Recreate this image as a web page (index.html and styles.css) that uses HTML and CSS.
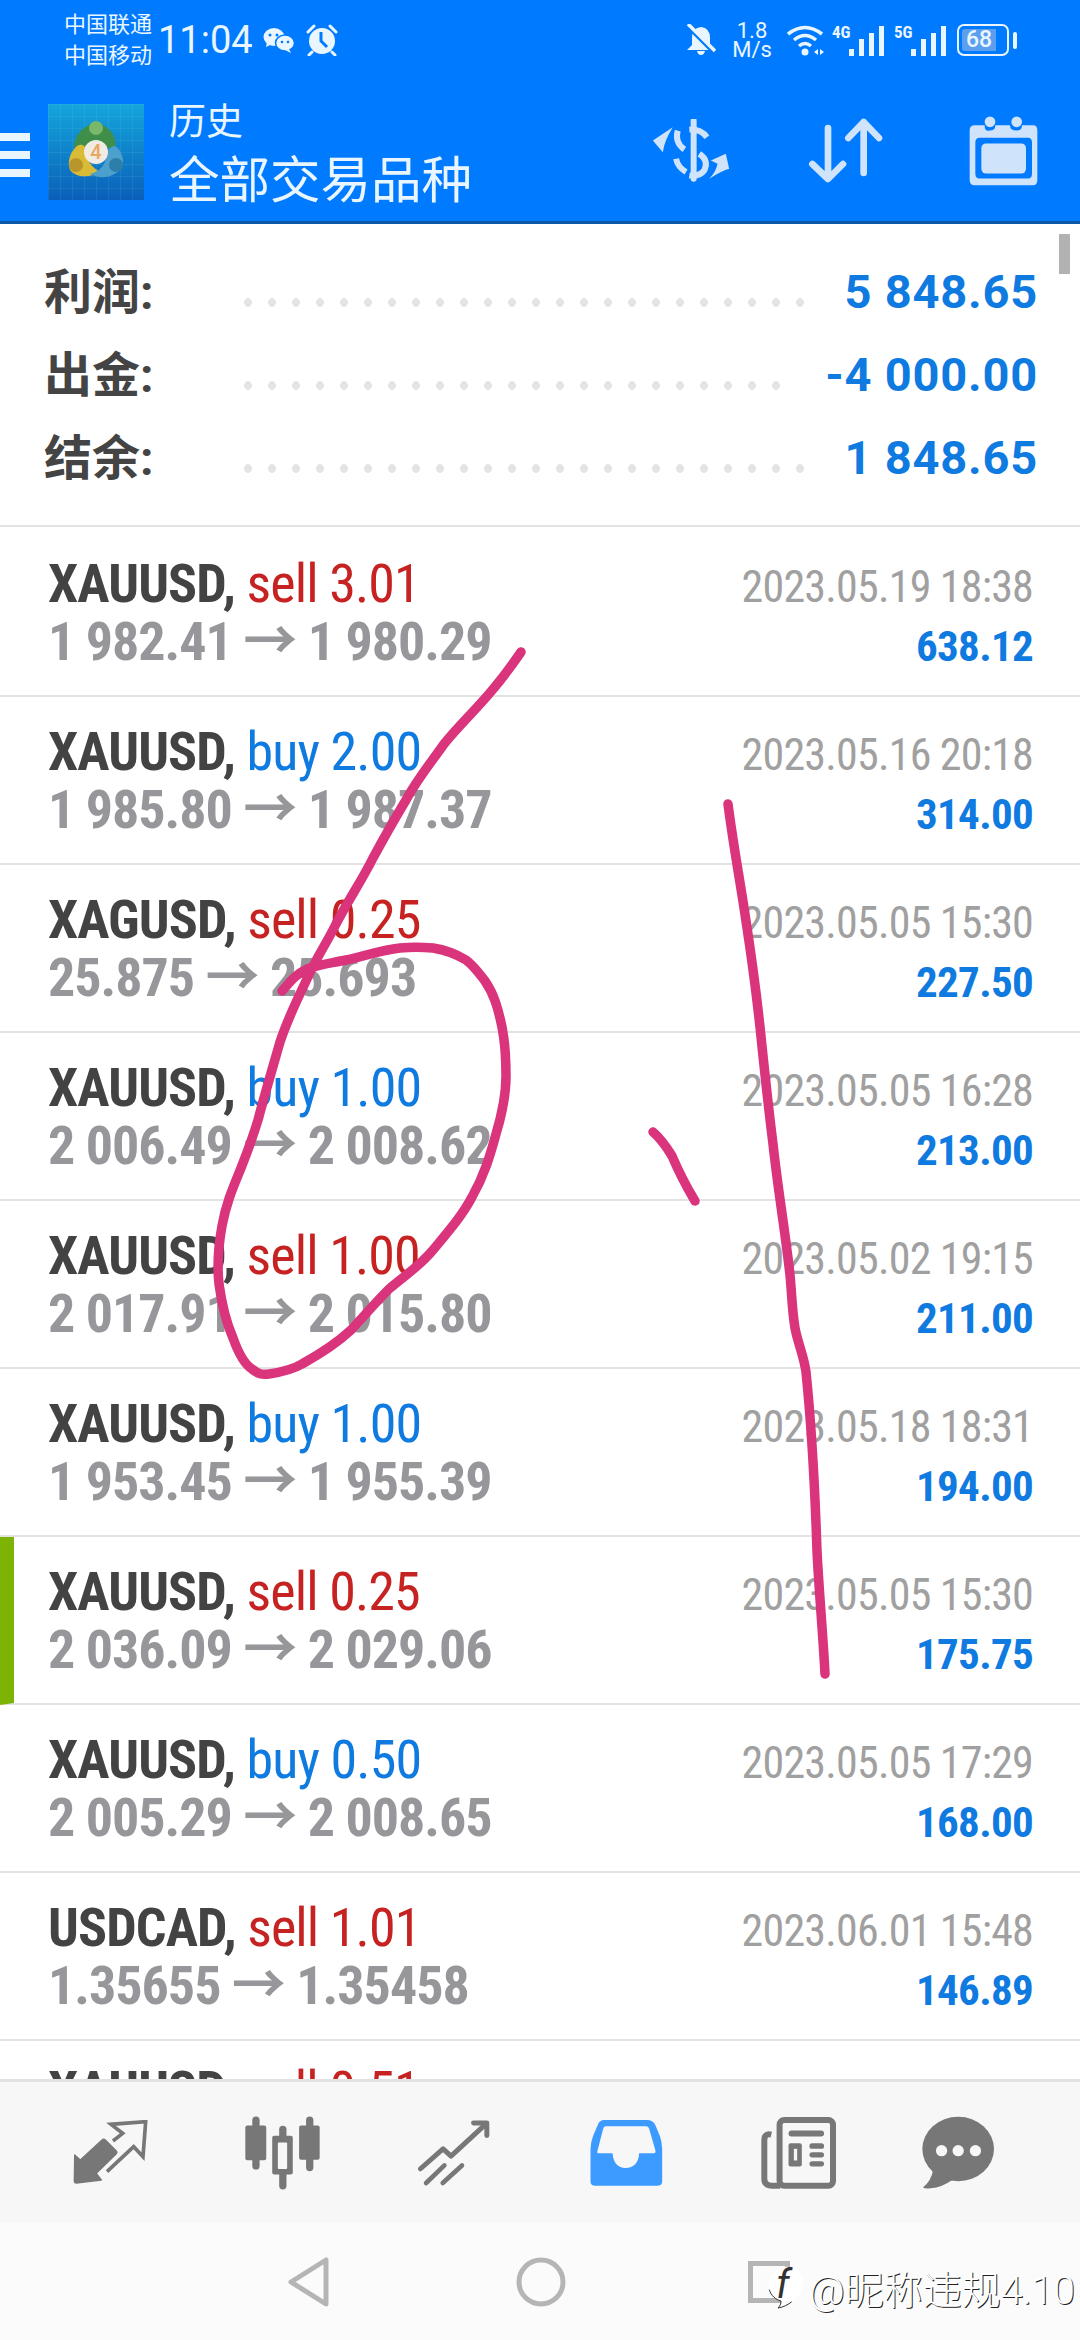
FILE: index.html
```html
<!DOCTYPE html>
<html lang="zh">
<head>
    <meta charset="UTF-8">
    <title>历史</title>
    <link rel="stylesheet" href="styles.css">
</head>
<body>
    <div class="app">
        <header class="topbar">
            <div class="status">
                <div class="carriers"><span>中国联通</span><span>中国移动</span></div>
                <span class="clock">11:04</span>
                <svg class="st-wechat" viewBox="0 0 32 26" width="32" height="26" fill="#eaf6ff">
                    <ellipse cx="11" cy="10" rx="10.5" ry="9"/><path d="M4 15 L3 20 L9 17Z"/>
                    <ellipse cx="22" cy="16" rx="9.5" ry="8" stroke="#007aff" stroke-width="1.5"/><path d="M26 22 L28 26 L22 23Z"/>
                    <circle cx="7" cy="8" r="1.5" fill="#007aff"/><circle cx="14" cy="8" r="1.5" fill="#007aff"/>
                    <circle cx="19" cy="15" r="1.3" fill="#007aff"/><circle cx="25" cy="15" r="1.3" fill="#007aff"/>
                </svg>
                <svg class="st-alarm" viewBox="0 0 34 32" width="34" height="32" fill="#eaf6ff">
                    <circle cx="17" cy="17" r="13"/>
                    <path d="M3 8 L9 2 M31 8 L25 2 M7 28 L4 31 M27 28 L30 31" stroke="#eaf6ff" stroke-width="3" stroke-linecap="round"/>
                    <path d="M16 8 V17 L22 23" fill="none" stroke="#007aff" stroke-width="3"/>
                </svg>
                <div class="status-right">
                    <svg viewBox="0 0 30 32" width="30" height="32" fill="#eaf6ff">
                        <path d="M15 3 Q24 4 24 14 V21 L29 26 H1 L6 21 V14 Q6 4 15 3Z M11 27 H19 Q18 31 15 31 Q12 31 11 27Z"/>
                        <path d="M1 1 L29 29" stroke="#007aff" stroke-width="5"/><path d="M2 0 L29 27" stroke="#eaf6ff" stroke-width="3.5"/>
                    </svg>
                    <div class="speed"><span>1.8</span><span>M/s</span></div>
                    <svg class="st-wifi" viewBox="0 0 38 32" width="38" height="32" fill="none" stroke="#eaf6ff" stroke-width="3.5">
                        <path d="M1 10 Q18 -3 35 10"/><path d="M7 16 Q18 7 29 16"/><path d="M12 22 Q18 17 24 22"/>
                        <circle cx="18" cy="28" r="3.5" fill="#eaf6ff" stroke="none"/>
                        <path d="M27 28 L31 25 V31Z M33 25 L37 28 L33 31Z" fill="#eaf6ff" stroke="none"/>
                    </svg>
                    <div class="signal"><span class="sig-tag">4G</span><i class="b1"></i><i class="b2"></i><i class="b3"></i><i class="b4"></i></div>
                    <div class="signal"><span class="sig-tag">5G</span><i class="b1"></i><i class="b2"></i><i class="b3"></i><i class="b4"></i></div>
                    <div class="battery"><span class="batt-fill">68</span></div><span class="batt-cap"></span>
                </div>
            </div>
            <div class="toolbar">
                <div class="burger"><i></i><i></i><i></i></div>
                <svg class="logo" viewBox="0 0 96 96" width="96" height="96">
                    <defs>
                        <linearGradient id="lg" x1="0" y1="0" x2="0" y2="1"><stop offset="0" stop-color="#14a6dc"/><stop offset="1" stop-color="#0a5fb8"/></linearGradient>
                        <pattern id="grid" width="12" height="12" patternUnits="userSpaceOnUse"><path d="M12 0 H0 V12" fill="none" stroke="#7fd0f0" stroke-opacity=".22"/></pattern>
                    </defs>
                    <rect width="96" height="96" fill="url(#lg)"/><rect width="96" height="96" fill="url(#grid)"/>
                    <path d="M48 19 C62 21 70 34 67 46 L58 43 C54 38 42 38 38 43 L27 47 C24 34 34 21 48 19Z" fill="#3f8f4a"/>
                    <path d="M29 42 C36 38 38 44 40 50 C38 58 46 64 52 68 C42 74 28 74 22 66 C19 58 22 48 29 42Z" fill="#d9bb35"/>
                    <path d="M67 42 C76 48 78 62 70 68 C60 75 50 74 42 70 C50 68 58 62 58 52 C60 46 62 42 67 42Z" fill="#4d9fcc"/>
                    <circle cx="48" cy="24" r="7" fill="#79b868"/>
                    <circle cx="28" cy="61" r="7" fill="#b8962c"/>
                    <circle cx="68" cy="61" r="7" fill="#2d7ea8"/>
                    <circle cx="48" cy="48" r="12" fill="#f0ece4"/>
                    <text x="48" y="55" class="logo-num">4</text>
                </svg>
                <div class="titles">
                    <span class="title-sm">历史</span>
                    <span class="title-lg">全部交易品种</span>
                </div>
                <div class="actions">
                    <svg class="act" viewBox="90 360 240 190" width="80" height="63">
                        <path d="M218 365 V540" stroke="#cfe3fb" stroke-width="18" stroke-linecap="round"/>
                        <path d="M258 415 Q240 390 205 392 M170 395 Q160 430 190 452 M235 465 Q265 485 250 515 Q235 535 205 530 M165 480 Q170 505 195 520" fill="none" stroke="#cfe3fb" stroke-width="18"/>
                        <path d="M155 385 L95 425 L125 460 Q130 425 155 385Z M265 540 Q305 515 325 510 L315 465 L270 485 L290 495 Q285 520 265 540Z" fill="#cfe3fb"/>
                    </svg>
                    <svg class="act" viewBox="565 360 225 195" width="75" height="65" fill="none" stroke="#cfe3fb" stroke-width="20" stroke-linecap="round" stroke-linejoin="round">
                        <path d="M625 390 V540 M578 498 L625 543 L670 498"/>
                        <path d="M732 525 V372 M686 420 L732 372 L778 420"/>
                    </svg>
                    <svg class="act" viewBox="1040 350 210 212" width="70" height="71">
                        <path fill-rule="evenodd" fill="#cfe3fb" d="M1060 380 H1090 Q1090 400 1105 396 Q1122 396 1122 380 H1166 Q1166 396 1186 396 Q1202 396 1202 380 H1235 Q1248 380 1248 395 V545 Q1248 560 1235 560 H1060 Q1045 560 1045 545 V395 Q1045 380 1060 380Z M1075 418 Q1062 418 1062 432 V525 Q1062 540 1075 540 H1220 Q1232 540 1232 525 V432 Q1232 418 1220 418Z"/>
                        <circle cx="1106" cy="370" r="16" fill="#cfe3fb"/><circle cx="1186" cy="370" r="16" fill="#cfe3fb"/>
                        <rect x="1080" y="435" width="134" height="90" rx="14" fill="#cfe3fb"/>
                    </svg>
                </div>
            </div>
        </header>

        <main class="content">
            <div class="scroll-thumb"></div>
            <section class="summary">
                <div class="sum-row"><span class="sum-label">利润:</span><span class="dots"></span><span class="sum-val">5 848.65</span></div>
                <div class="sum-row"><span class="sum-label">出金:</span><span class="dots"></span><span class="sum-val">-4 000.00</span></div>
                <div class="sum-row"><span class="sum-label">结余:</span><span class="dots"></span><span class="sum-val">1 848.65</span></div>
            </section>

            <div class="deal deal-first">
                <div class="deal-l"><div class="l1"><b>XAUUSD,</b> <span class="sell">sell 3.01</span></div><div class="l2">1 982.41 → 1 980.29</div></div>
                <div class="deal-r"><div class="date">2023.05.19 18:38</div><div class="profit">638.12</div></div>
            </div>
            <div class="deal">
                <div class="deal-l"><div class="l1"><b>XAUUSD,</b> <span class="buy">buy 2.00</span></div><div class="l2">1 985.80 → 1 987.37</div></div>
                <div class="deal-r"><div class="date">2023.05.16 20:18</div><div class="profit">314.00</div></div>
            </div>
            <div class="deal">
                <div class="deal-l"><div class="l1"><b>XAGUSD,</b> <span class="sell">sell 0.25</span></div><div class="l2">25.875 → 25.693</div></div>
                <div class="deal-r"><div class="date">2023.05.05 15:30</div><div class="profit">227.50</div></div>
            </div>
            <div class="deal">
                <div class="deal-l"><div class="l1"><b>XAUUSD,</b> <span class="buy">buy 1.00</span></div><div class="l2">2 006.49 → 2 008.62</div></div>
                <div class="deal-r"><div class="date">2023.05.05 16:28</div><div class="profit">213.00</div></div>
            </div>
            <div class="deal">
                <div class="deal-l"><div class="l1"><b>XAUUSD,</b> <span class="sell">sell 1.00</span></div><div class="l2">2 017.91 → 2 015.80</div></div>
                <div class="deal-r"><div class="date">2023.05.02 19:15</div><div class="profit">211.00</div></div>
            </div>
            <div class="deal">
                <div class="deal-l"><div class="l1"><b>XAUUSD,</b> <span class="buy">buy 1.00</span></div><div class="l2">1 953.45 → 1 955.39</div></div>
                <div class="deal-r"><div class="date">2023.05.18 18:31</div><div class="profit">194.00</div></div>
            </div>
            <div class="deal deal-mark">
                <div class="deal-l"><div class="l1"><b>XAUUSD,</b> <span class="sell">sell 0.25</span></div><div class="l2">2 036.09 → 2 029.06</div></div>
                <div class="deal-r"><div class="date">2023.05.05 15:30</div><div class="profit">175.75</div></div>
            </div>
            <div class="deal">
                <div class="deal-l"><div class="l1"><b>XAUUSD,</b> <span class="buy">buy 0.50</span></div><div class="l2">2 005.29 → 2 008.65</div></div>
                <div class="deal-r"><div class="date">2023.05.05 17:29</div><div class="profit">168.00</div></div>
            </div>
            <div class="deal">
                <div class="deal-l"><div class="l1"><b>USDCAD,</b> <span class="sell">sell 1.01</span></div><div class="l2">1.35655 → 1.35458</div></div>
                <div class="deal-r"><div class="date">2023.06.01 15:48</div><div class="profit">146.89</div></div>
            </div>
            <div class="deal deal-last">
                <div class="deal-l"><div class="l1"><b>XAUUSD,</b> <span class="sell">sell 0.51</span></div></div>
            </div>
        </main>

        <nav class="tabs">
            <svg viewBox="95 85 228 195" width="76" height="65" fill="#777">
                <path d="M103 190 L120 205 L185 145 Q190 140 195 145 L228 178 Q232 182 228 186 L168 245 L183 265 L108 274 Q102 274 102 268Z" stroke="#777" stroke-width="4" stroke-linejoin="round"/>
                <path d="M218 148 L247 125 L212 98 L316 90 L308 195 L280 165 L200 240" fill="none" stroke="#777" stroke-width="11"/>
            </svg>
            <svg viewBox="608 66 232 228" width="77" height="76">
                <g fill="#777">
                    <rect x="612" y="97" width="63" height="105" rx="6"/><rect x="633" y="70" width="22" height="160" rx="11"/>
                    <rect x="774" y="97" width="62" height="103" rx="6"/><rect x="795" y="70" width="22" height="165" rx="11"/>
                    <rect x="714" y="98" width="22" height="192" rx="11"/><rect x="693" y="128" width="62" height="117" rx="6"/>
                </g>
                <rect x="710" y="148" width="28" height="80" rx="3" fill="#f7f7f7"/>
            </svg>
            <svg viewBox="1130 75 222 205" width="74" height="68" fill="none" stroke="#777" stroke-width="15" stroke-linecap="round" stroke-linejoin="round">
                <path d="M1140 225 L1208 165 L1232 187 L1335 92"/>
                <path d="M1300 87 H1340 V125"/>
                <path d="M1157 268 L1212 215 M1207 268 L1265 215" stroke-width="14"/>
            </svg>
            <svg viewBox="88 75 224 204" width="75" height="68">
                <path fill="#3d9bff" d="M132 78 H262 Q278 78 286 92 L300 125 Q307 145 307 165 V262 Q307 275 294 275 H104 Q92 275 92 262 V165 Q92 145 100 125 L114 92 Q120 78 132 78Z"/>
                <path fill="#f7f7f7" d="M138 97 H258 Q266 97 268 104 L287 170 Q288 178 280 178 H238 Q235 222 197 222 Q162 222 158 178 H118 Q110 178 113 170 L130 104 Q132 97 138 97Z"/>
            </svg>
            <svg viewBox="604 64 232 224" width="77" height="75">
                <rect x="663" y="78" width="161" height="198" rx="14" fill="none" stroke="#777" stroke-width="18"/>
                <path d="M638 122 Q617 117 617 140 V255 Q617 276 640 276 H665" fill="none" stroke="#777" stroke-width="18"/>
                <g fill="#777">
                    <rect x="690" y="110" width="107" height="18" rx="9"/>
                    <rect x="690" y="148" width="40" height="70" rx="6"/>
                    <rect x="753" y="148" width="44" height="17" rx="8"/><rect x="753" y="175" width="44" height="16" rx="8"/><rect x="753" y="202" width="44" height="16" rx="8"/>
                </g>
                <rect x="706" y="165" width="10" height="35" fill="#f7f7f7"/>
            </svg>
            <svg class="tab-chat" viewBox="1084 66 220 222" width="73" height="74" fill="#777">
                <ellipse cx="1193" cy="165" rx="108" ry="97"/>
                <path d="M1118 225 Q1112 262 1087 280 Q1092 286 1110 283 Q1145 280 1175 258Z"/>
                <g fill="#f7f7f7"><circle cx="1143" cy="170" r="17"/><circle cx="1193" cy="170" r="17"/><circle cx="1245" cy="170" r="17"/></g>
            </svg>
        </nav>

        <footer class="navbar">
            <svg class="nav-back" viewBox="0 0 42 50" width="42" height="50" fill="none" stroke="#b5b5b5" stroke-width="5" stroke-linejoin="round"><path d="M38 3 V47 L3 25Z"/></svg>
            <svg class="nav-home" viewBox="0 0 50 50" width="50" height="50" fill="none" stroke="#b5b5b5" stroke-width="5"><circle cx="25" cy="25" r="22"/></svg>
            <span class="nav-recent"></span>
            <div class="mark">
                <div class="mark-logo">
                    <svg viewBox="0 0 38 44" width="38" height="44"><path d="M30 5 C20 -2 5 3 2 16 C0 26 6 34 14 36 C14 39 13 41 11 43 C18 42 24 38 29 33 C37 26 39 12 30 5Z" fill="#fff" stroke="#333" stroke-width="1" stroke-dasharray="40 60" stroke-dashoffset="-44"/></svg>
                    <span class="mark-f">f</span>
                </div>
                <span class="mark-text">@昵称违规4.10</span>
            </div>
        </footer>

        <!-- pen marks drawn over the list -->
        <svg class="ink" viewBox="0 0 1080 2340" width="1080" height="2340" fill="none" stroke="#d9347c" stroke-width="9.5" stroke-linecap="round" stroke-linejoin="round">
            <path d="M521 652 C510 668 504 676 494 688 C476 710 460 724 444 744 C430 764 418 778 406 800 C394 820 386 834 373 858 C360 884 348 900 335 926 C325 946 316 958 307 979 C296 1002 288 1018 280 1042 C272 1070 266 1090 258 1120 C252 1140 248 1150 241 1168 C232 1190 226 1204 222 1226 C218 1248 217 1266 219 1284 C222 1306 226 1322 233 1338 C238 1352 244 1364 252 1369 C258 1374 262 1375 269 1374 C282 1372 292 1370 302 1364 C320 1354 336 1344 351 1330 C364 1316 376 1302 389 1289 C404 1276 420 1266 433 1250 C448 1232 462 1216 472 1197 C484 1176 490 1156 496 1134 C502 1114 506 1096 506 1076 C506 1058 505 1042 502 1027 C498 1008 494 994 485 981 C478 972 474 966 466 960 C456 954 446 950 433 948 C420 947 412 947 400 948 C382 950 364 956 346 960 C332 963 320 964 307 969 C296 974 290 982 282 991"/>
            <path d="M728 804 C734 850 740 880 746 921 C752 960 756 990 760 1027 C764 1066 768 1104 773 1144 C778 1190 785 1230 790 1275 C792 1296 792 1310 795 1328 C798 1344 804 1356 806 1372 C812 1430 815 1490 817 1551 C819 1592 823 1634 825 1674"/>
            <path d="M653 1132 C660 1138 666 1146 672 1156 C678 1170 686 1186 695 1201"/>
        </svg>
    </div>
</body>
</html>
```

FILE: styles.css
```css
* {
    box-sizing: border-box;
}

body {
    margin: 0;
    background-color: #fff;
    font-family: Roboto, "Noto Sans CJK SC", sans-serif;
}

.app {
    position: relative;
    display: flex;
    flex-direction: column;
    width: 1080px;
    height: 2340px;
    overflow: hidden;
}

/* top blue area */
.topbar {
    height: 224px;
    flex-shrink: 0;
    background-color: #007aff;
    border-bottom: 3px solid #0a5aa8;
    color: #eaf6ff;
}

.status {
    display: flex;
    align-items: center;
    height: 80px;
    padding: 0 63px 0 64px;
}

.carriers {
    display: flex;
    flex-direction: column;
    font-size: 22px;
    line-height: 31px;
    white-space: nowrap;
}

.clock {
    margin-left: 6px;
    font-size: 38px;
}

.st-wechat {
    margin-left: 10px;
}

.st-alarm {
    margin-left: 10px;
}

.status-right {
    display: flex;
    align-items: center;
    margin-left: auto;
}

.speed {
    display: flex;
    flex-direction: column;
    align-items: center;
    width: 42px;
    margin-left: 15px;
    font-size: 22px;
    line-height: 19px;
}

.st-wifi {
    margin-left: 14px;
}

.signal {
    position: relative;
    display: flex;
    align-items: flex-end;
    gap: 5px;
    width: 50px;
    height: 32px;
    margin-left: 7px;
    padding-left: 17px;
}

.signal + .signal {
    margin-left: 12px;
}

.sig-tag {
    position: absolute;
    left: 0;
    top: -2px;
    font-size: 17px;
    font-weight: 700;
    font-stretch: 75%;
}

.signal i {
    width: 5px;
    flex-shrink: 0;
    background-color: #eaf6ff;
}

.signal .b1 { height: 7px; }
.signal .b2 { height: 17px; }
.signal .b3 { height: 23px; }
.signal .b4 { height: 30px; }

.battery {
    width: 52px;
    height: 32px;
    margin-left: 13px;
    padding: 3px;
    border: 2px solid #eaf6ff;
    border-radius: 7px;
}

.batt-fill {
    display: block;
    width: 34px;
    height: 100%;
    background-color: #5c9fef;
    border-radius: 3px 0 0 3px;
    padding-left: 4px;
    font-size: 23px;
    font-weight: 500;
    line-height: 22px;
    white-space: nowrap;
}

.batt-cap {
    width: 4px;
    height: 17px;
    margin-left: 4px;
    background-color: #eaf6ff;
    border-radius: 2px;
}

.toolbar {
    display: flex;
    align-items: center;
    height: 141px;
}

.burger {
    display: flex;
    flex-direction: column;
    gap: 10px;
    width: 30px;
    margin-top: 9px;
    margin-right: 18px;
}

.burger i {
    height: 8px;
    background-color: #eaf6ff;
}

.logo {
    flex-shrink: 0;
    margin-top: 2px;
}

.logo-num {
    font-size: 20px;
    font-weight: 500;
    text-anchor: middle;
    fill: #e8a860;
}

.titles {
    display: flex;
    flex-direction: column;
    margin-top: 10px;
    margin-left: 25px;
    white-space: nowrap;
}

.title-sm {
    font-size: 37px;
    line-height: 50px;
}

.title-lg {
    font-size: 50.5px;
    line-height: 66px;
}

.actions {
    display: flex;
    align-items: center;
    margin-left: auto;
    padding-right: 42px;
}

.actions .act:nth-child(2) {
    margin-left: 77px;
}

.actions .act:nth-child(3) {
    margin-left: 85px;
}

/* list area */
.content {
    position: relative;
    flex: 1;
    overflow: hidden;
}

.scroll-thumb {
    position: absolute;
    top: 10px;
    right: 10px;
    width: 11px;
    height: 40px;
    background-color: #b2b2b2;
}

.summary {
    height: 303px;
    padding: 26px 42px 0 44px;
    border-bottom: 2px solid #e3e3e3;
}

.sum-row {
    display: flex;
    align-items: center;
    height: 83px;
}

.sum-label {
    width: 200px;
    margin-bottom: 8px;
    font-size: 48px;
    font-weight: 700;
    color: #444;
}

.dots {
    flex: 1;
    height: 9px;
    margin-right: 30px;
    margin-top: 22px;
    background-image: radial-gradient(ellipse 4px 4.5px at 4px 4.5px, #e4e4e4 90%, transparent 100%);
    background-size: 24px 9px;
    background-repeat: repeat-x;
}

.sum-val {
    font-size: 47px;
    font-weight: 700;
    color: #0f7ae0;
    letter-spacing: 0.8px;
}

.deal {
    display: flex;
    justify-content: space-between;
    height: 168px;
    padding: 26px 47px 0 48px;
    border-bottom: 2px solid #e3e3e3;
    white-space: nowrap;
}

.deal-first {
    height: 170px;
    padding-top: 28px;
}

.deal-last {
    padding-top: 21px;
}

.deal-mark {
    border-left: 14px solid #7cb305;
    padding-left: 34px;
}

.l1 {
    font-size: 54px;
    line-height: 58px;
    font-stretch: 75%;
    letter-spacing: -0.9px;
}

.l1 b {
    color: #434343;
}

.sell {
    color: #c62222;
}

.buy {
    color: #0f7ae0;
}

.l2 {
    font-size: 54px;
    line-height: 58px;
    font-weight: 700;
    font-stretch: 75%;
    letter-spacing: -1px;
    color: #97979b;
}

.deal-r {
    text-align: right;
    font-stretch: 75%;
}

.date {
    height: 62px;
    padding-top: 3px;
    font-size: 44px;
    line-height: 58px;
    letter-spacing: -0.8px;
    color: #a0a0a0;
}

.profit {
    font-size: 43px;
    line-height: 58px;
    font-weight: 700;
    letter-spacing: -0.7px;
    color: #0f7ae0;
}

/* bottom tabs */
.tabs {
    display: grid;
    grid-template-columns: repeat(6, 1fr);
    align-items: center;
    justify-items: center;
    flex-shrink: 0;
    height: 144px;
    padding: 0 24px;
    background-color: #f7f7f7;
    border-top: 3px solid #e2e2e2;
}

.tab-chat {
    margin-right: 24px;
}

.navbar {
    position: relative;
    display: flex;
    align-items: center;
    flex-shrink: 0;
    height: 117px;
    background-color: #fbfbfb;
}

.nav-back {
    margin-left: 288px;
}

.nav-home {
    margin-left: 186px;
}

.nav-recent {
    width: 42px;
    height: 42px;
    margin-left: 182px;
    border: 5px solid #b5b5b5;
}

.mark {
    position: absolute;
    left: 767px;
    top: 36px;
    display: flex;
    align-items: center;
    gap: 4px;
}

.mark-logo {
    position: relative;
    width: 38px;
    height: 44px;
}

.mark-f {
    position: absolute;
    left: 9px;
    top: -3px;
    font-size: 40px;
    line-height: 46px;
    font-style: italic;
    color: #333;
}

.mark-text {
    font-size: 39px;
    font-weight: 300;
    color: #fff;
    white-space: nowrap;
    text-shadow: 1px 1px 0 #222;
}

/* handwriting layer */
.ink {
    position: absolute;
    left: 0;
    top: 0;
    pointer-events: none;
}
```
